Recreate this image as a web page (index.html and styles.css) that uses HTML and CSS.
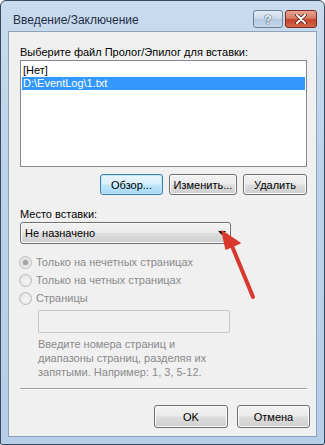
FILE: index.html
```html
<!DOCTYPE html>
<html lang="ru">
<head>
    <meta charset="UTF-8">
    <title>Введение/Заключение</title>
    <link rel="stylesheet" href="styles.css">
</head>
<body>
    <div class="window">
        <div class="titlebar">
            <span class="title">Введение/Заключение</span>
            <div class="caption-btns">
                <div class="cap help">?</div>
                <div class="cap close">
                    <svg width="12" height="10" viewBox="0 0 12 10">
                        <path d="M2 1 L10 9 M10 1 L2 9" stroke="#5a1c14" stroke-width="3.6" stroke-linecap="round"/>
                        <path d="M2 1 L10 9 M10 1 L2 9" stroke="#ffffff" stroke-width="2" stroke-linecap="round"/>
                    </svg>
                </div>
            </div>
        </div>

        <div class="client">
            <div class="label">Выберите файл Пролог/Эпилог для вставки:</div>
            <div class="listbox">
                <div class="item">[Нет]</div>
                <div class="item selected">D:\EventLog\1.txt</div>
            </div>

            <div class="btn-row">
                <div class="btn focused">Обзор...</div>
                <div class="btn btn-edit">Изменить...</div>
                <div class="btn btn-del">Удалить</div>
            </div>

            <div class="label label-place">Место вставки:</div>
            <div class="combo">
                <span>Не назначено</span>
                <span class="combo-arrow"></span>
            </div>

            <div class="radios">
                <div class="radio checked"><span class="dot"></span>Только на нечетных страницах</div>
                <div class="radio"><span class="dot"></span>Только на четных страницах</div>
                <div class="radio"><span class="dot"></span>Страницы</div>
            </div>

            <div class="pages">
                <div class="textbox"></div>
                <div class="hint">Введите номера страниц и<br>диапазоны страниц, разделяя их<br>запятыми. Например: 1, 3, 5-12.</div>
            </div>

            <div class="separator"></div>

            <div class="btn-row bottom">
                <div class="btn btn-ok">OK</div>
                <div class="btn btn-cancel">Отмена</div>
            </div>
        </div>

        <!-- стрелка поверх окна -->
        <svg class="pointer" width="60" height="80" viewBox="0 0 60 80">
            <path d="M46 67 L25 16" stroke="#d8392c" stroke-width="4" stroke-linecap="round"/>
            <path d="M15 1 L33 13 L19 19 Z" fill="#d8392c" stroke="#d8392c" stroke-width="1.5" stroke-linejoin="round"/>
        </svg>
    </div>
</body>
</html>
```

FILE: styles.css
```css
* {
    box-sizing: border-box;
}

body {
    margin: 0;
    padding: 0;
    font-family: "Liberation Sans", Arial, sans-serif;
    font-size: 11px;
    background: #ffffff;
}

.window {
    position: relative;
    width: 325px;
    height: 445px;
    border: 1px solid #3a4a5c;
    border-radius: 6px 6px 2px 2px;
    background: linear-gradient(180deg, #c9dbee 0%, #bcd2ea 40%, #b7cee8 100%);
    display: flex;
    flex-direction: column;
}

.titlebar {
    height: 30px;
    flex: none;
    display: flex;
    align-items: flex-start;
    justify-content: space-between;
    padding: 0 7px 0 12px;
}

.title {
    color: #1e2e45;
    font-size: 12px;
    margin-top: 12px;
}

.caption-btns {
    display: flex;
    gap: 2px;
    margin-top: 9px;
}

.cap {
    height: 18px;
    border: 1px solid #6d7f96;
    border-radius: 3px;
    display: flex;
    align-items: center;
    justify-content: center;
}

.help {
    width: 30px;
    background: linear-gradient(180deg, #e3ecf6 0%, #c8d8ea 50%, #b5c9e0 51%, #c6d7ea 100%);
    color: #f4f8fc;
    font-weight: bold;
    font-size: 13px;
    text-shadow: 0 0 1px #3f5673, 0 0 1px #3f5673, 0 0 1px #3f5673;
}

.close {
    width: 32px;
    border-color: #7a2a22;
    background: linear-gradient(180deg, #e8a493 0%, #d77b63 45%, #c4432b 55%, #d2674a 100%);
}

.client {
    flex: 1;
    margin: 0 7px 7px 7px;
    border: 1px solid #8ca3bf;
    background: #f0f0f0;
    padding: 13px 9px 0 11px;
    display: flex;
    flex-direction: column;
    color: #000;
}

.label {
    line-height: 15px;
    height: 15px;
}

.listbox {
    height: 107px;
    border: 1px solid #828790;
    background: #fff;
    padding: 3px 1px 0 1px;
}

.item {
    height: 13px;
    line-height: 13px;
    padding-left: 1px;
}

.item.selected {
    background: #3399ff;
    color: #fff;
}

.btn-row {
    display: flex;
    justify-content: flex-end;
    gap: 6px;
    margin-top: 7px;
}

.btn {
    width: 63px;
    height: 21px;
    border: 1px solid #707070;
    border-radius: 3px;
    background: linear-gradient(180deg, #f2f2f2 0%, #ebebeb 48%, #dddddd 52%, #cfcfcf 100%);
    display: flex;
    align-items: center;
    justify-content: center;
    box-shadow: inset 0 0 0 1px #fbfbfb;
}

.btn-edit {
    width: 68px;
}

.btn-del {
    width: 64px;
}

.btn.focused {
    border-color: #3c7fb1;
    box-shadow: inset 0 0 0 1px #bfe6f6;
    background: linear-gradient(180deg, #eaf6fd 0%, #d9f0fc 48%, #bee6fd 52%, #a7d9f5 100%);
}

.label-place {
    margin-top: 12px;
}

.combo {
    width: 211px;
    height: 22px;
    border: 1px solid #707070;
    border-radius: 3px;
    background: linear-gradient(180deg, #f2f2f2 0%, #ebebeb 48%, #dddddd 52%, #cfcfcf 100%);
    box-shadow: inset 0 0 0 1px #fbfbfb;
    display: flex;
    align-items: center;
    justify-content: space-between;
    padding: 0 4px 0 4px;
}

.combo-arrow {
    width: 0;
    height: 0;
    border-left: 4px solid transparent;
    border-right: 4px solid transparent;
    border-top: 4px solid #000;
}

.radios {
    margin-top: 9px;
    display: flex;
    flex-direction: column;
}

.radio {
    height: 18px;
    display: flex;
    align-items: center;
    gap: 4px;
    color: #8a8a8a;
}

.dot {
    width: 13px;
    height: 13px;
    margin-left: -1px;
    border: 1px solid #b9b9b9;
    border-radius: 50%;
    background: radial-gradient(circle at 60% 60%, #f6f6f6, #dedede);
    display: flex;
    align-items: center;
    justify-content: center;
}

.radio.checked .dot::after {
    content: "";
    width: 5px;
    height: 5px;
    border-radius: 50%;
    background: #a4a4a4;
    box-shadow: 0 0 0 1px #d0d0d0;
}

.pages {
    padding-left: 18px;
    margin-top: 3px;
}

.textbox {
    width: 192px;
    height: 23px;
    border: 1px solid #c8c8c8;
    border-radius: 2px;
    background: #f0f0f0;
}

.hint {
    margin-top: 4px;
    line-height: 14px;
    color: #8a8a8a;
}

.separator {
    margin-top: 9px;
    height: 2px;
    border-top: 1px solid #a0a0a0;
    border-bottom: 1px solid #ffffff;
}

.btn-row.bottom {
    margin-top: 15px;
    gap: 9px;
    margin-right: -3px;
}

.btn-ok {
    width: 74px;
    height: 23px;
}

.btn-cancel {
    width: 73px;
    height: 23px;
}

.pointer {
    position: absolute;
    left: 206px;
    top: 229px;
}
```
